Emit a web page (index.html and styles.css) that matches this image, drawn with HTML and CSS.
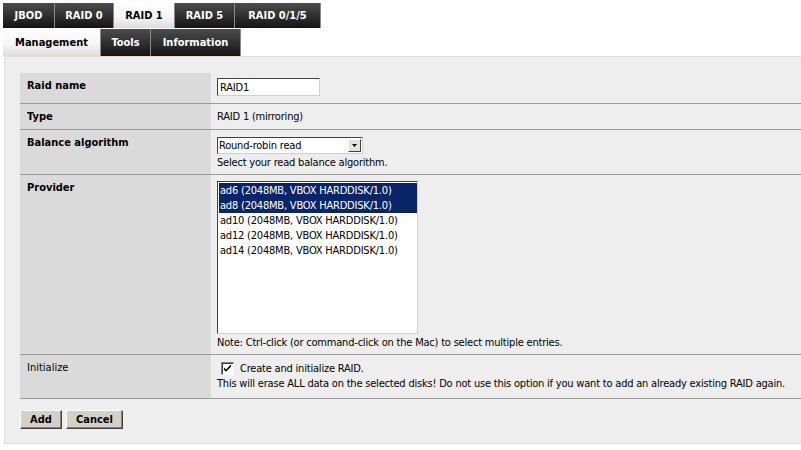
FILE: index.html
```html
<!DOCTYPE html>
<html>
<head>
<meta charset="utf-8">
<link rel="stylesheet" href="styles.css">
</head>
<body>
<div class="tabs tabs-top">
  <a class="tab">JBOD</a>
  <a class="tab">RAID 0</a>
  <a class="tab active">RAID 1</a>
  <a class="tab">RAID 5</a>
  <a class="tab">RAID 0/1/5</a>
</div>
<div class="tabs tabs-sub">
  <a class="tab active">Management</a>
  <a class="tab">Tools</a>
  <a class="tab">Information</a>
</div>
<div class="panel">
  <div class="form">
    <div class="label b r-name">Raid name</div>
    <div class="value r-name"><input class="text" type="text" value="RAID1"></div>

    <div class="label b r-type">Type</div>
    <div class="value r-type">RAID 1 (mirroring)</div>

    <div class="label b r-bal">Balance algorithm</div>
    <div class="value r-bal">
      <div class="select"><span class="sel-text">Round-robin read</span><span class="sel-btn"><svg width="5" height="3" viewBox="0 0 5 3"><path d="M0 0h5L2.5 3z" fill="#000"/></svg></span></div>
      <div class="desc">Select your read balance algorithm.</div>
    </div>

    <div class="label b r-prov">Provider</div>
    <div class="value r-prov">
      <div class="listbox">
        <div class="opt sel">ad6 (2048MB, VBOX HARDDISK/1.0)</div>
        <div class="opt sel">ad8 (2048MB, VBOX HARDDISK/1.0)</div>
        <div class="opt">ad10 (2048MB, VBOX HARDDISK/1.0)</div>
        <div class="opt">ad12 (2048MB, VBOX HARDDISK/1.0)</div>
        <div class="opt">ad14 (2048MB, VBOX HARDDISK/1.0)</div>
      </div>
      <div class="desc">Note: Ctrl-click (or command-click on the Mac) to select multiple entries.</div>
    </div>

    <div class="label r-init">Initialize</div>
    <div class="value r-init">
      <div class="check-line"><span class="checkbox"><svg width="9" height="9" viewBox="0 0 9 9"><path d="M1 3.5l2 2 5-5v2.2L3 7.7 1 5.7z" fill="#000"/></svg></span><span>Create and initialize RAID.</span></div>
      <div class="desc">This will erase ALL data on the selected disks! Do not use this option if you want to add an already existing RAID again.</div>
    </div>
  </div>
  <div class="buttons">
    <button class="btn btn-add">Add</button>
    <button class="btn btn-cancel">Cancel</button>
  </div>
</div>
</body>
</html>
```
FILE: styles.css
```css
html, body {
  margin: 0;
  padding: 0;
  background: #ffffff;
  font-family: "DejaVu Sans Condensed", "DejaVu Sans", sans-serif;
  font-size: 11px;
  color: #000;
}
.tabs {
  display: flex;
  margin-left: 3px;
}
.tabs-top {
  margin-top: 3px;
  height: 25px;
}
.tabs-sub {
  margin-top: 1px;
  height: 27px;
}
.tab {
  display: flex;
  align-items: center;
  justify-content: center;
  font-weight: bold;
  color: #fff;
  background: linear-gradient(#4c4c4c, #141414);
  border-right: 1px solid #8a8a8a;
  font-size: 11px;
}
.tab.active {
  color: #000;
  background: linear-gradient(#ffffff, #f6f6f6 55%, #dcdcdc);
}
.tabs-top .tab:nth-child(1) { width: 51px; }
.tabs-top .tab:nth-child(2) { width: 58px; }
.tabs-top .tab:nth-child(3) { width: 60px; }
.tabs-top .tab:nth-child(4) { width: 59px; }
.tabs-top .tab:nth-child(5) { width: 85px; }
.tabs-sub .tab:nth-child(1) { width: 97px; }
.tabs-sub .tab:nth-child(2) { width: 49px; }
.tabs-sub .tab:nth-child(3) { width: 89px; }

.panel {
  margin-left: 4px;
  background: #eeeeee;
  border-top: 1px solid #e2ddd0;
  border-left: 1px solid #dedede;
  border-bottom: 1px solid #dedede;
  padding: 16px 0 14px 15px;
}
.form {
  display: grid;
  grid-template-columns: 191px 590px;
}
.label, .value {
  box-sizing: border-box;
  border-bottom: 1px solid #9a9a9a;
}
.label {
  background: #dadada;
  padding: 6px 0 0 7px;
}
.b { font-weight: bold; }
.value {
  background: #eeeeee;
  padding-left: 6px;
  letter-spacing: -0.2px;
}
.r-name { height: 31px; }
.value.r-name { padding-top: 5px; }
.r-type { height: 26px; }
.value.r-type { padding-top: 6px; }
.r-bal { height: 45px; }
.value.r-bal { padding-top: 7px; }
.r-prov { height: 180px; }
.value.r-prov { padding-top: 6px; }
.r-init { height: 44px; }
.value.r-init { padding-top: 7px; }

.text {
  box-sizing: border-box;
  width: 103px;
  height: 18px;
  margin: 0;
  padding: 1px 2px;
  font: inherit;
  letter-spacing: -0.2px;
  border: 1px solid;
  border-color: #404040 #d4d0c8 #d4d0c8 #404040;
  background: #fff;
}
.select {
  box-sizing: border-box;
  width: 146px;
  height: 17px;
  display: flex;
  border: 1px solid;
  border-color: #404040 #d4d0c8 #d4d0c8 #404040;
  background: #fff;
}
.sel-text { flex: 1; padding-left: 1px; line-height: 15px; }
.sel-btn {
  width: 13px;
  margin: 1px;
  background: #e4e2dc;
  border: 1px solid;
  border-color: #fff #404040 #404040 #fff;
  box-sizing: border-box;
  display: flex;
  align-items: center;
  justify-content: center;
}
.desc { line-height: 14px; margin-top: 2px; }
.listbox {
  box-sizing: border-box;
  width: 201px;
  height: 153px;
  background: #fff;
  border: 1px solid;
  border-color: #404040 #d4d0c8 #d4d0c8 #404040;
  padding: 1px 0 0 1px;
}
.opt { line-height: 15px; padding-left: 1px; }
.opt.sel { background: #0a246a; color: #fff; }
.check-line { display: flex; align-items: center; gap: 6px; margin-left: 4px; line-height: 13px; }
.checkbox {
  box-sizing: border-box;
  width: 13px; height: 13px;
  background: #fff;
  border: 1px solid;
  border-color: #808080 #fff #fff #808080;
  box-shadow: inset 1px 1px 0 #404040;
  display: flex; align-items: center; justify-content: center;
}
.buttons {
  display: flex;
  gap: 4px;
  margin-top: 11px;
}
.btn {
  margin: 0;
  height: 19px;
  padding: 0;
  font: inherit;
  font-weight: bold;
  background: #d4d0c8;
  border: 1px solid;
  border-color: #fff #404040 #404040 #fff;
  box-shadow: inset -1px -1px 0 #808080;
}
.btn-add { width: 42px; }
.btn-cancel { width: 57px; }
```
